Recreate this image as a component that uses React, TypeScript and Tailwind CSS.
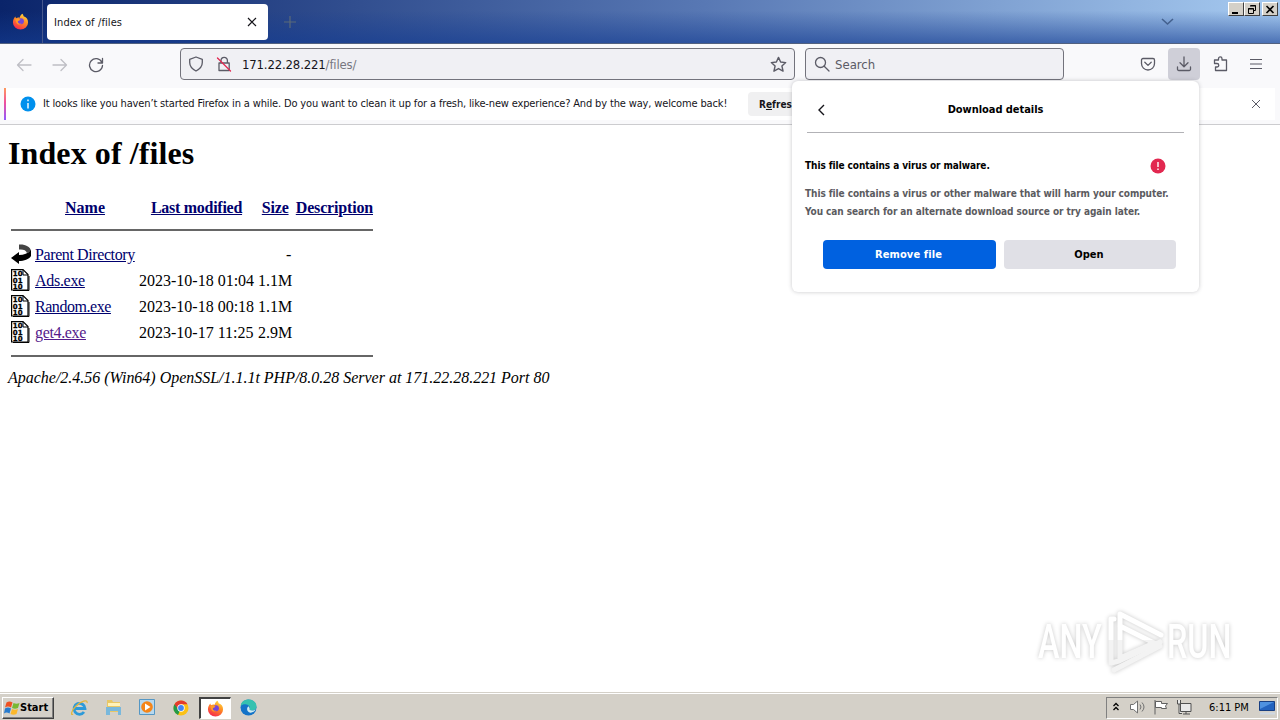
import type { ReactNode } from "react";

const FILES = [
  { name: "Ads.exe", modified: "2023-10-18 01:04", size: "1.1M", link: "text-[#00006e] tracking-[-0.3px]" },
  { name: "Random.exe", modified: "2023-10-18 00:18", size: "1.1M", link: "text-[#00006e] tracking-[-0.45px]" },
  { name: "get4.exe", modified: "2023-10-17 11:25", size: "2.9M", link: "text-[#551a8b] tracking-[-0.35px]" },
];

function Icon({ size = 16, className = "", children }: { size?: number; className?: string; children: ReactNode }) {
  return (
    <svg width={size} height={size} viewBox="0 0 16 16" fill="none" stroke="currentColor" strokeWidth="1.3" strokeLinecap="round" strokeLinejoin="round" className={`block shrink-0 ${className}`}>
      {children}
    </svg>
  );
}

function FirefoxLogo({ size }: { size: number }) {
  return (
    <svg width={size} height={size} viewBox="0 0 18 18" className="block shrink-0">
      <defs>
        <linearGradient id="fx" x1="0.8" y1="0" x2="0.3" y2="1">
          <stop offset="0" stopColor="#ffe040" />
          <stop offset="0.45" stopColor="#ff8a24" />
          <stop offset="1" stopColor="#f5264f" />
        </linearGradient>
      </defs>
      <path d="M11 .8c1 1.3 1.2 2 1.3 2.7C15.5 4.500 17 7 17 10a8 7.500 0 0 1-16 0c0-2.600.9-4.900 2.600-6.400.1 1 .3 1.500.7 2C5.600 4.600 7 4.600 8.200 5 8.400 3.200 9.400 1.700 11 .8z" fill="url(#fx)" />
      <circle cx="9.400" cy="8.800" r="3.200" fill="#7446d8" />
      <path d="M3.500 6.500c2-1 4-.6 5.500.7-1 1-2.500.8-3 2 .2 1.700 2 2.500 4 2-1.500 2-5.500 1.500-6.500-4.700z" fill="#ff9b28" />
    </svg>
  );
}

function WindowButtons() {
  const box = "flex h-[14px] w-[16px] items-center justify-center border border-t-white border-l-white border-r-[#404040] border-b-[#404040] bg-[#d4d0c8]";
  return (
    <div className="flex pt-[2px] pr-[2px]">
      <div className={box}><svg width="12" height="11"><path d="M2 8h6v2H2z" /></svg></div>
      <div className={box}><svg width="12" height="11" fill="none" stroke="#000"><path d="M4.500 1.500h5v5h-2M4 2h6M2.500 4.500h5v5h-5zM2 5h6" /></svg></div>
      <div className={`ml-[2px] ${box}`}><svg width="12" height="11" stroke="#000" strokeWidth="1.600"><path d="M2.500 2l7 7M9.500 2l-7 7" /></svg></div>
    </div>
  );
}

function TabBar() {
  return (
    <div className="h-[44px] shrink-0 bg-[linear-gradient(90deg,#0a246a,#5878b4_55%,#a6caf0)]">
      <div className="flex h-full justify-between border-b border-[#52617f] bg-[linear-gradient(180deg,transparent_25%,rgba(20,60,145,0.62))]">
        <div className="flex">
          <div className="flex w-[43px] justify-center border-r border-[#46588d] pt-[13px] pr-[2px]"><FirefoxLogo size={17} /></div>
          <div className="mt-[4px] ml-[4px] flex h-[36px] w-[221px] items-center justify-between rounded-[4px] bg-white pr-[11px] pl-[7px] text-[11px]">
            <span className="pt-[2px] tracking-[0.1px]">Index of /files</span>
            <svg width="10" height="10" stroke="#15141a" strokeWidth="1.200"><path d="M1 1l8 8M9 1l-8 8" /></svg>
          </div>
          <svg width="12" height="12" className="mt-[16px] ml-[16px]" stroke="#5b6a78" strokeWidth="1.200"><path d="M6 0v12M0 6h12" /></svg>
        </div>
        <div className="flex">
          <svg width="13" height="8" className="mt-[18px] mr-[54px]" fill="none" stroke="#44618e" strokeWidth="1.600"><path d="M1 1l5.500 5L12 1" /></svg>
          <WindowButtons />
        </div>
      </div>
    </div>
  );
}

function Toolbar() {
  return (
    <div className="flex h-[44px] shrink-0 bg-[#f9f9fb] pt-[4px] text-[#5b5b66]">
      <div className="flex h-[32px] w-[180px] items-center gap-[20px] pt-[1px] pl-[16px]">
        <Icon className="text-[#bfbfc5]"><path d="M15 8H1.500M7 2.500L1.500 8 7 13.500" /></Icon>
        <Icon className="text-[#bfbfc5]"><path d="M1 8h13.500M9 2.500L14.500 8 9 13.500" /></Icon>
        <Icon><path d="M13.800 5.200A6.500 6.500 0 1 0 14.500 8.500M14.500 1.500v4.500H10" /></Icon>
      </div>
      <div className="flex h-[32px] w-[615px] items-center rounded-[4px] border border-[#73737c] bg-[#f0f0f4] pr-[7px] pl-[7px]">
        <Icon><path d="M8 1l6.300 2.300v3.200c0 3.600-2.500 6.500-6.300 8.500-3.800-2-6.300-4.900-6.300-8.500V3.300z" /></Icon>
        <Icon className="ml-[12px]">
          <path d="M3 7h10.200v7.500H3zM5 7V4.500a3.200 3.200 0 0 1 6.400 0V7" />
          <path d="M1.500 2l13 13" stroke="#e22850" />
        </Icon>
        <span className="ml-[10px] flex-1 pt-[1px] text-[13px] tracking-[-0.15px] text-[#15141a]">171.22.28.221<span className="text-[#77777f]">/files/</span></span>
        <Icon size={17}><path d="M8 1.300l2 4.400 4.800.5-3.600 3.200 1.100 4.900L8 11.800l-4.300 2.500 1.100-4.900L1.200 6.200 6 5.700z" /></Icon>
      </div>
      <div className="ml-[10px] flex h-[32px] w-[259px] items-center rounded-[4px] border border-[#73737c] bg-[#f0f0f4] pl-[8px]">
        <Icon><circle cx="6.500" cy="6.500" r="5" /><path d="M10.200 10.200l4.800 4.800" /></Icon>
        <span className="ml-[5px] pt-[1px] text-[13px]">Search</span>
      </div>
      <div className="ml-[68px] flex h-[32px] w-[32px] items-center justify-center">
        <Icon><path d="M3 2.500h10a1.500 1.500 0 0 1 1.500 1.500v3.500a6.500 6.500 0 0 1-13 0V4A1.500 1.500 0 0 1 3 2.500zM4.800 6.300L8 9.400l3.200-3.100" /></Icon>
      </div>
      <div className="ml-[4px] flex h-[32px] w-[32px] items-center justify-center rounded-[4px] bg-[#cfcfd8]">
        <Icon><path d="M8 1v9.500M4 6.800l4 4 4-4M1.500 11v2.200a1.300 1.300 0 0 0 1.300 1.300h10.400a1.300 1.300 0 0 0 1.300-1.300V11" /></Icon>
      </div>
      <div className="ml-[12px] flex h-[32px] w-[16px] items-center">
        <Icon><path d="M6.500 4V2.700a1.700 1.700 0 0 1 3.500 0V4h4.500v10.500H3.500V11H5a1.700 1.700 0 0 0 0-3.500H2.500V4z" /></Icon>
      </div>
      <svg width="14" height="32" className="ml-[21px]" stroke="currentColor" strokeWidth="1.200"><path d="M1 11.500h12M1 16h12M1 20.500h12" /></svg>
    </div>
  );
}

function NotificationBar() {
  return (
    <div className="h-[37px] shrink-0 border-b border-[#cccccf] bg-[#f9f9fb] pr-[5px] pl-[4px]">
      <div className="flex h-[32px] items-center bg-white text-[11px]">
        <div className="h-full w-[2px] bg-[linear-gradient(180deg,#ff9a5c,#f0509c_45%,#9059ff)]" />
        <svg width="16" height="16" className="ml-[14px]">
          <circle cx="8" cy="8" r="7.500" fill="#0090ed" />
          <path d="M8 3.500v1.700M8 7v5.500" stroke="#fff" strokeWidth="1.400" />
        </svg>
        <span className="ml-[7px] w-[684px] tracking-[-0.147px] whitespace-nowrap">It looks like you haven’t started Firefox in a while. Do you want to clean it up for a fresh, like-new experience? And by the way, welcome back!</span>
        <span className="ml-[21px] h-[24px] w-[120px] rounded-[4px] bg-[#f0f0f1] pl-[11px] text-[10px] leading-[25px] font-bold">R<u>e</u>fresh Firefox…</span>
        <svg width="10" height="10" className="mr-[14px] ml-auto" stroke="#5b5b66"><path d="M1 1l8 8M9 1l-8 8" /></svg>
      </div>
    </div>
  );
}

function DownloadPanel() {
  return (
    <div className="absolute top-[81px] left-[792px] h-[211px] w-[407px] rounded-[6px] bg-white font-bold text-black shadow-[0_0_4px_rgba(58,57,68,0.28)]">
      <div className="mx-[15px] flex h-[52px] items-center border-b border-[#b2b2b6] pt-[6px]">
        <svg width="8" height="12" className="ml-[10px]" fill="none" stroke="#15141a" strokeWidth="1.400"><path d="M7 1L2 6l5 5" /></svg>
        <span className="flex-1 pt-[2px] pr-[18px] text-center text-[11px] tracking-[-0.05px]">Download details</span>
      </div>
      <div className="mt-[24px] flex h-[18px] justify-between pr-[33px] pl-[13px] text-[10px] leading-[18px]">
        <span className="tracking-[-0.08px]">This file contains a virus or malware.</span>
        <svg width="16" height="16" className="mt-[1px]"><circle cx="8" cy="8" r="7.500" fill="#e22850" /><path d="M8 4v5M8 10.500V12" stroke="#fff" strokeWidth="1.400" /></svg>
      </div>
      <p className="mt-[10px] pl-[13px] text-[10px] leading-[18px] tracking-[-0.075px] whitespace-nowrap text-[#5b5b60]">
        This file contains a virus or other malware that will harm your computer.<br />You can search for an alternate download source or try again later.
      </p>
      <div className="mt-[19px] flex gap-[8px] pl-[31px] text-center text-[11px] leading-[30px]">
        <div className="h-[29px] w-[173px] rounded-[4px] bg-[#0061e0] pr-[2px] tracking-[0.1px] text-white">Remove file</div>
        <div className="h-[29px] w-[172px] rounded-[4px] bg-[#e0e0e6] pr-[2px]">Open</div>
      </div>
    </div>
  );
}

function BinaryIcon() {
  return (
    <svg width="20" height="22" className="block">
      <path d="M.6.600h11.400l5 5v15.400H.6z" fill="#fff" stroke="#000" strokeWidth="1.200" />
      <path d="M12 1v5h5M18 7v14.500H2" fill="none" stroke="#000" />
      <g fontFamily="DejaVu Sans" fontWeight="700" fontSize="7" stroke="#000" strokeWidth="0.300">
        <text x="1.800" y="7.300">10</text>
        <text x="1.800" y="13.500">01</text>
        <text x="1.800" y="19.700">10</text>
      </g>
    </svg>
  );
}

function Listing() {
  return (
    <main className="flex-1 px-[8px] pt-[10px] font-['Liberation_Serif',serif] text-[16px] leading-[18px] text-black">
      <h1 className="h-[36px] text-[32px] leading-[36px] font-bold tracking-[0.1px]">Index of /files</h1>
      <div className="mt-[26px] ml-[3px] w-[362px]">
        <div className="flex h-[34px] border-b-2 border-[#666] pt-[2px] font-bold whitespace-nowrap text-[#00006e] underline">
          <span className="ml-[54px] w-[86px]">Name</span>
          <span className="w-[111px] tracking-[-0.27px]">Last modified</span>
          <span className="w-[34px] tracking-[-0.2px]">Size</span>
          <span className="tracking-[-0.17px]">Description</span>
        </div>
        <div className="mt-[10px] flex h-[26px] items-center">
          <svg width="20" height="22" viewBox="0 0 20 22">
            <path d="M8 1.500c6-.500 11 2 12 6L16 10c-1-3-4-4-8-3.500z" fill="#444" />
            <path d="M0 15l8-6v3c5 0 9-1.500 12-5v6c-2 3.500-7 5-12 5v3z" />
          </svg>
          <span className="ml-[4px] w-[251px] pt-[2px] tracking-[-0.4px] text-[#00006e] underline">Parent Directory</span>
          <span className="pt-[2px]">-</span>
        </div>
        {FILES.map((file) => (
          <div key={file.name} className="flex h-[26px] items-center whitespace-nowrap">
            <BinaryIcon />
            <span className={`ml-[4px] w-[104px] pt-[2px] underline ${file.link}`}>{file.name}</span>
            <span className="w-[119px] pt-[2px]">{file.modified}</span>
            <span className="pt-[2px]">{file.size}</span>
          </div>
        ))}
        <div className="h-[12px] border-b-2 border-[#666]" />
      </div>
      <address className="mt-[12px] tracking-[-0.015px] whitespace-nowrap">Apache/2.4.56 (Win64) OpenSSL/1.1.1t PHP/8.0.28 Server at 171.22.28.221 Port 80</address>
    </main>
  );
}

function Watermark() {
  return (
    <svg width="250" height="76" viewBox="0 0 250 76" className="absolute top-[604px] left-[1030px] drop-shadow-[0_0_2px_rgba(0,0,0,0.22)]">
      <defs>
        <linearGradient id="wm" x1="0" y1="0" x2="0" y2="76" gradientUnits="userSpaceOnUse">
          <stop offset="0.480" stopColor="#fff" />
          <stop offset="0.480" stopColor="#f3f3f3" />
        </linearGradient>
      </defs>
      <g fill="url(#wm)" fontFamily="Roboto" fontSize="49" fontWeight="500">
        <text transform="translate(8 54) scale(0.66 1)">ANY</text>
        <text transform="translate(137 54) scale(0.66 1)">RUN</text>
      </g>
      <g fill="none" stroke="url(#wm)" strokeWidth="5" strokeLinejoin="round" strokeLinecap="round">
        <path d="M90 54V10l41 21M90 22l34 17-34 15" />
        <path d="M84 15h-3v44l8-2 41-19" />
        <path d="M84 66l46-24" />
      </g>
    </svg>
  );
}

function Taskbar() {
  return (
    <footer className="flex h-[28px] shrink-0 items-center border-t border-[#d4d0c8] bg-[#d4d0c8] text-[11px] text-black shadow-[inset_0_1px_0_#fff]">
      <div className="mt-[2px] ml-[2px] flex h-[22px] w-[52px] items-center border border-t-white border-l-white border-r-[#404040] border-b-[#404040] pl-[1px] shadow-[inset_-1px_-1px_0_#808080]">
        <svg width="16" height="16" viewBox="0 0 16 16">
          <path d="M2.500 2.500q3-2 6 0L7 7.500q-3-2-6 0z" fill="#ef5122" />
          <path d="M9.500 3q3 1.500 6 0L14 8q-3 1.500-6 0z" fill="#78b832" />
          <path d="M1 8.500q3-2 6 0l-1.500 5q-3-2-5.500 0z" fill="#287bce" />
          <path d="M8 9q3 1.500 6 0l-1.500 5q-3 1.500-6 0z" fill="#fcb82a" />
        </svg>
        <span className="pt-[1px] text-[11px] font-bold">Start</span>
      </div>
      <div className="mt-[2px] ml-[17px] flex items-center">
        <svg width="17" height="18" viewBox="0 0 17 18" fill="none">
          <path d="M4 9.500h10a5.500 5.500 0 1 0-1 3.500" stroke="#2d9ad9" strokeWidth="2.800" />
          <path d="M2 15C-.5 17 0 12 5 7S17 0 16 4" stroke="#e3b53a" strokeWidth="1.200" />
        </svg>
        <svg width="17" height="17" className="ml-[17px]" viewBox="0 0 17 17">
          <path d="M2 1h5l1 2h7v10H2z" fill="#e8c766" />
          <path d="M3 4h12v3H3z" fill="#fff2b8" />
          <path d="M1 8h15v8h-3v-4H5v4H1z" fill="#79b8dc" />
        </svg>
        <svg width="17" height="17" className="ml-[17px]" viewBox="0 0 17 17">
          <path d="M.5.5h15v15H.5z" fill="#b7d8ee" stroke="#5597c4" />
          <circle cx="8" cy="8" r="5.800" fill="#f58518" />
          <path d="M6 4.500l5.500 3.500L6 11.500z" fill="#fff" />
        </svg>
        <svg width="16" height="16" className="ml-[17px]" viewBox="0 0 16 16">
          <circle cx="8" cy="8" r="7.500" fill="#fbc116" />
          <path d="M8 8L5 15A7.500 7.500 0 0 1 1.500 4.300z" fill="#229a49" />
          <path d="M1.500 4.300A7.500 7.500 0 0 1 14.500 4.300H8L5 9z" fill="#e33b2e" />
          <circle cx="8" cy="8" r="3.700" fill="#fff" />
          <circle cx="8" cy="8" r="2.900" fill="#4285f4" />
        </svg>
        <div className="ml-[10px] flex h-[22px] w-[32px] items-center justify-center border border-t-2 border-l-2 border-t-[#404040] border-l-[#404040] border-r-white border-b-white bg-white">
          <FirefoxLogo size={17} />
        </div>
        <svg width="17" height="17" className="ml-[9px]" viewBox="0 0 17 17">
          <circle cx="8.500" cy="8.500" r="8" fill="#1473c8" />
          <path d="M.7 7C1 2.500 5 .5 8.500.5c5 0 8 3.500 8 7 0 3-2.500 4-4.500 4-2.500 0-3-1-2.300-2.200C10.500 6 4 3.500.7 7z" fill="#35c1b0" />
          <path d="M9.700 9.300c-.7 1.200-.2 2.200 2.300 2.200 1.500 0 2.800-.4 3.600-1.200-1 3-5 4.200-7 2.700-2-1.400-2-4.500-.1-5.800z" fill="#d4ecf0" />
        </svg>
      </div>
      <div className="mt-[2px] mr-[2px] ml-auto flex h-[22px] w-[172px] items-center border border-t-[#808080] border-l-[#808080] border-r-white border-b-white pl-[5px]">
        <svg width="8" height="10" className="mb-[2px]" fill="none" stroke="#000" strokeWidth="1.300"><path d="M1.500 4L4 1.500 6.500 4M1.500 8L4 5.500 6.500 8" /></svg>
        <svg width="17" height="16" className="mb-[2px] ml-[9px]" fill="#fff" stroke="#707070"><path d="M1.500 5.500h3L8.500 2v12l-4-3.500h-3z" /><path d="M11 5.500q2 2.500 0 5M13 3.500q4 4.500 0 9" fill="none" /></svg>
        <svg width="16" height="16" className="mb-[1px] ml-[7px]" fill="#fff" stroke="#606060"><path d="M2 1v14.500M2.500 2.500h6v2h6l-2 2.500 1 2.500H8.500v-1h-6z" /></svg>
        <svg width="16" height="16" className="mb-[1px] ml-[7px]" fill="#e8e8e8" stroke="#505050"><path d="M4.500 4.500h10.500v8h-10.500zM7 15h7M10 13v2M1.500 1v4h3V1M3 5v9.500h3" /></svg>
        <span className="ml-[17px] pt-[1px] whitespace-nowrap">6:11 PM</span>
        <svg width="17" height="16" className="mr-[1px] ml-auto"><path d="M.5 1.500h15v9H.5z" fill="#2363bf" stroke="#183f83" /><path d="M1 2h14L1 9z" fill="#4e91e0" /><path d="M1 12.500h15v2H1z" fill="#cfd8e3" /></svg>
      </div>
    </footer>
  );
}

export default function App() {
  return (
    <div className="relative flex h-[720px] w-[1280px] flex-col overflow-hidden bg-white font-['DejaVu_Sans_Condensed','DejaVu_Sans',sans-serif] text-[#15141a]">
      <TabBar />
      <Toolbar />
      <NotificationBar />
      <Listing />
      <Taskbar />
      <DownloadPanel />
      <Watermark />
    </div>
  );
}
